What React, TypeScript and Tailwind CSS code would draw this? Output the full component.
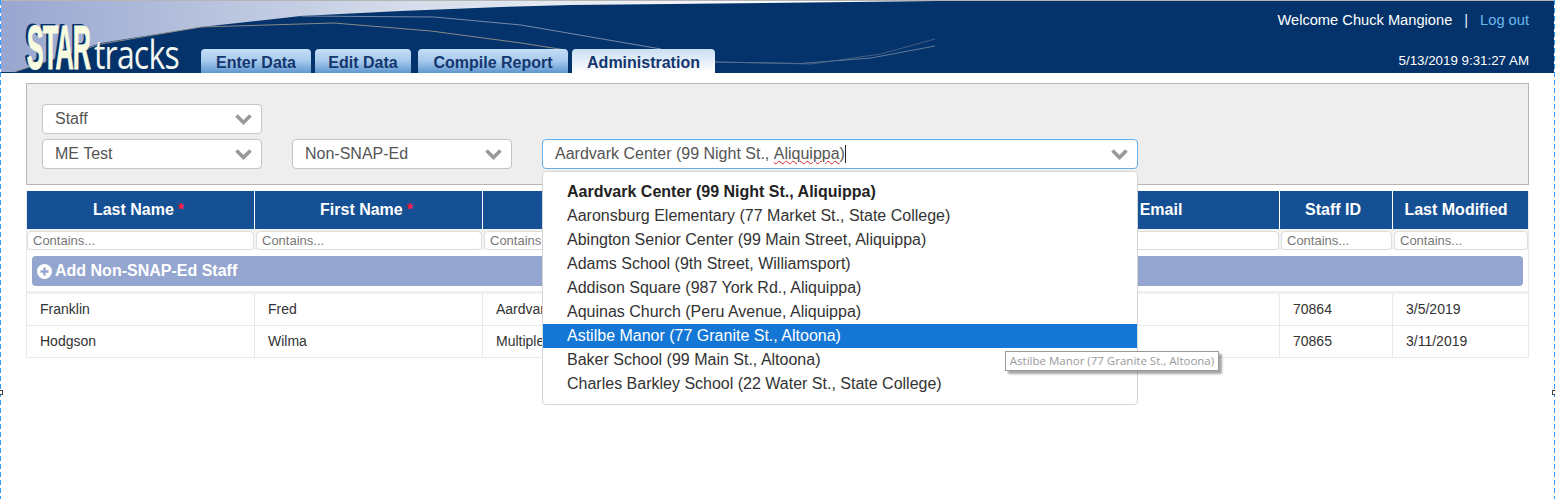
const arial = "font-['Liberation_Sans',Arial,sans-serif]";

const sites = [
  "Aaronsburg Elementary (77 Market St., State College)",
  "Abington Senior Center (99 Main Street, Aliquippa)",
  "Adams School (9th Street, Williamsport)",
  "Addison Square (987 York Rd., Aliquippa)",
  "Aquinas Church (Peru Avenue, Aliquippa)",
];

const columns = [
  { key: "last", label: "Last Name", required: true, pad: "pr-[4px]" },
  { key: "first", label: "First Name", required: true, pad: "pr-[4px]" },
  // site column's title sits behind the open dropdown
  { key: "site", label: "", pad: "" },
  { key: "email", label: "Email", pad: "" },
  { key: "id", label: "Staff ID", pad: "pr-[6px]" },
  { key: "modified", label: "Last Modified", pad: "pr-[10px]" },
];

const rows = [
  ["Franklin", "Fred", "Aardvark Center", "", "70864", "3/5/2019"],
  ["Hodgson", "Wilma", "Multiple", "", "70865", "3/11/2019"],
];

const gridCols = "grid grid-cols-[228px_228px_560px_237px_113px_136px]";

function Swoosh() {
  return (
    <svg className="absolute inset-0" width="1553" height="72" viewBox="0 0 1553 72" fill="none">
      <defs>
        <linearGradient id="sky" x1="0" y1="0" x2="800" y2="0" gradientUnits="userSpaceOnUse">
          <stop offset="0" stopColor="#98a6d0" />
          <stop offset="0.5" stopColor="#d4dcea" />
          <stop offset="1" stopColor="#ffffff" />
        </linearGradient>
      </defs>
      <path d="M0 0H935L763 2L670 3L570 4L500 6L400 10L300 15L200 26L100 42L13 71H0Z" fill="url(#sky)" />
      <path d="M13 71L100 43L200 26L333 22L430 30L520 42L565 49" stroke="#a9a08f" strokeWidth="0.8" />
      <path d="M300 15L433 16L520 24L660 48" stroke="#8fa0bd" strokeWidth="0.8" />
      <path d="M714 61L800 62.5L870 57L934 45" stroke="#7a8aa3" strokeWidth="0.8" />
      <path d="M714 61L810 63L880 53L934 38" stroke="#52688a" strokeWidth="0.8" />
    </svg>
  );
}

function Chevron() {
  return (
    <svg width="17" height="11" viewBox="0 0 17 11" fill="none" className="shrink-0">
      <path d="M1.5 1.5L8.5 8.5L15.5 1.5" stroke="#999999" strokeWidth="3.6" />
    </svg>
  );
}

function PlusCircle() {
  return (
    <svg width="15" height="15" viewBox="0 0 15 15" className="shrink-0">
      <circle cx="7.5" cy="7.5" r="7.5" fill="#ffffff" />
      <path d="M3.5 7.5H11.5M7.5 3.5V11.5" stroke="#94a6cf" strokeWidth="2.4" />
    </svg>
  );
}

function Logo() {
  return (
    <div className="relative w-[175px] h-[52px] shrink-0">
      <span className="absolute left-[-47px] top-[-6px] text-[63px] leading-[64px] font-bold tracking-[-2px] text-[#f8fbe0] scale-x-[0.4] origin-center font-['Liberation_Sans',Arial,sans-serif] [-webkit-text-stroke:1px_#f8fbe0] [text-shadow:-6px_-2px_0_#03336a] whitespace-nowrap">
        STAR
      </span>
      <span className="absolute left-[68px] top-[9px] text-[40px] leading-[48px] font-normal tracking-[-1px] text-[#f4f7f0] origin-left scale-x-[0.8] font-['Open_Sans',sans-serif]">
        tracks
      </span>
    </div>
  );
}

function Tab({ label, width, active }: { label: string; width: string; active?: boolean }) {
  return (
    <div
      className={`${width} h-[24px] pt-[3px] rounded-t-[4px] flex items-center justify-center text-[16px] font-bold text-[#14366e] ${
        active
          ? "bg-gradient-to-b from-[#c9dff3] to-white"
          : "bg-gradient-to-b from-[#c4def6] via-[#a6c9ec] to-[#5f97cf]"
      }`}
    >
      {label}
    </div>
  );
}

function Select({ value, width }: { value: string; width: string }) {
  return (
    <div className={`${width} h-[30px] bg-white border border-[#c4c4c4] rounded-[4px] flex items-center justify-between pl-[12px] pr-[9px] text-[16px] text-[#555]`}>
      <span>{value}</span>
      <Chevron />
    </div>
  );
}

function SiteDropdown() {
  return (
    <div className="relative w-[596px] h-[30px]">
      <div className="h-[30px] bg-white border border-[#66afe9] rounded-[4px] flex items-center justify-between pl-[12px] pr-[9px] text-[16px] text-[#555]">
        <span className="flex items-center">
          Aardvark Center (99 Night St.,&nbsp;
          <span className="underline decoration-wavy decoration-[#e0202a] decoration-1">Aliquippa</span>)
          <span className="w-px h-[18px] bg-[#222]" />
        </span>
        <Chevron />
      </div>
      <div className="absolute z-10 left-0 top-[32px] w-[596px] h-[234px] bg-white border border-[#d5d5d5] rounded-[4px] pt-[8px] text-[16px] leading-[24px] text-[#333]">
        <div className="pl-[24px] font-bold text-[#222]">Aardvark Center (99 Night St., Aliquippa)</div>
        {sites.map((s) => (
          <div key={s} className="pl-[24px]">{s}</div>
        ))}
        <div className="pl-[24px] bg-[#1477d6] text-white">Astilbe Manor (77 Granite St., Altoona)</div>
        <div className="pl-[24px]">Baker School (99 Main St., Altoona)</div>
        <div className="pl-[24px]">Charles Barkley School (22 Water St., State College)</div>
      </div>
      <div className="absolute z-20 left-[463px] top-[212px] w-[214px] h-[20px] bg-white border border-[#999] flex items-center justify-center text-[11.5px] text-[#999] whitespace-nowrap font-['Open_Sans',sans-serif] shadow-[3px_3px_2px_rgba(0,0,0,0.35)]">
        Astilbe Manor (77 Granite St., Altoona)
      </div>
    </div>
  );
}

function StaffTable() {
  return (
    <div className="mt-[6px] border-x border-[#e8e8e8]">
      <div className={`${gridCols} h-[38px] bg-[#154f94] text-white text-[16px] font-bold`}>
        {columns.map((c) => (
          <div key={c.key} className={`flex items-center justify-center ${c.pad} border-r border-white last:border-r-0`}>
            {c.label}
            {c.required && <span className="ml-[4px] text-[#ff1a3c]">*</span>}
          </div>
        ))}
      </div>
      <div className={`${gridCols} h-[21px] bg-[#f3f3f3] py-[2px] text-[13px] text-[#777]`}>
        {columns.map((c) => (
          <div key={c.key} className="mx-[1px] first:ml-0 bg-white border border-[#ddd] rounded-[4px] pl-[5px] leading-[17px]">
            Contains...
          </div>
        ))}
      </div>
      <div className="h-[41px] px-[5px] pt-[6px] bg-white">
        <div className="h-[30px] bg-[#94a6cf] rounded-[4px] flex items-center pl-[5px] gap-[3px] text-white text-[16px] font-bold">
          <PlusCircle />
          Add Non-SNAP-Ed Staff
        </div>
      </div>
      <div className="h-[3px] bg-[#f0f0f0]" />
      {rows.map((r) => (
        <div key={r[0]} className={`${gridCols} h-[32px] border-b border-[#e8e8e8] text-[14px] text-[#333]`}>
          {r.map((cell, i) => (
            <div key={i} className="flex items-center pl-[13px] border-r border-[#e8e8e8] last:border-r-0 whitespace-nowrap">
              {cell}
            </div>
          ))}
        </div>
      ))}
    </div>
  );
}

export default function App() {
  return (
    <div className={`relative flex h-[499px] w-[1555px] overflow-hidden bg-white ${arial}`}>
      <div className="w-px shrink-0 bg-[repeating-linear-gradient(to_bottom,#2e9bff_0,#2e9bff_5px,transparent_5px,transparent_8px)]" />
      <div className="flex-1 min-w-0">
        {/* Header */}
        <div className="relative h-[73px] bg-[#03336a] border-t border-[#b5b5b5] flex items-end pl-[25px] pr-[25px]">
          <Swoosh />
          <div className="relative flex items-end">
            <Logo />
            <div className="flex gap-[4px]">
              <Tab label="Enter Data" width="w-[110px]" />
              <Tab label="Edit Data" width="w-[96px]" />
              <div className="ml-[3px]">
                <Tab label="Compile Report" width="w-[150px]" />
              </div>
              <Tab label="Administration" width="w-[143px]" active />
            </div>
          </div>
          <div className="relative ml-auto h-full flex flex-col items-end text-white">
            <div className="mt-[11px] text-[14.67px] leading-[16px]">
              Welcome Chuck Mangione
              <span className="ml-[12px] mr-[12px] text-[#e8edf4]">|</span>
              <span className="text-[#6cb8f0]">Log out</span>
            </div>
            <div className="mt-[25px] text-[13.33px] leading-[16px]">5/13/2019 9:31:27 AM</div>
          </div>
        </div>

        <div className="px-[25px]">
          {/* Filters */}
          <div className="mt-[10px] h-[102px] bg-[#eeeeee] border border-[#b5b5b5] pt-[20px] pl-[15px] flex flex-col gap-[5px]">
            <Select value="Staff" width="w-[220px]" />
            <div className="flex gap-[30px]">
              <Select value="ME Test" width="w-[220px]" />
              <Select value="Non-SNAP-Ed" width="w-[220px]" />
              <SiteDropdown />
            </div>
          </div>
          <StaffTable />
        </div>
      </div>
      <div className="w-px shrink-0 bg-[repeating-linear-gradient(to_bottom,#2e9bff_0,#2e9bff_5px,transparent_5px,transparent_8px)]" />
      <div className="absolute left-0 top-[390px] w-[3px] h-[5px] bg-white border border-l-0 border-[#444]" />
      <div className="absolute right-0 top-[390px] w-[3px] h-[5px] bg-white border border-r-0 border-[#444]" />
    </div>
  );
}
